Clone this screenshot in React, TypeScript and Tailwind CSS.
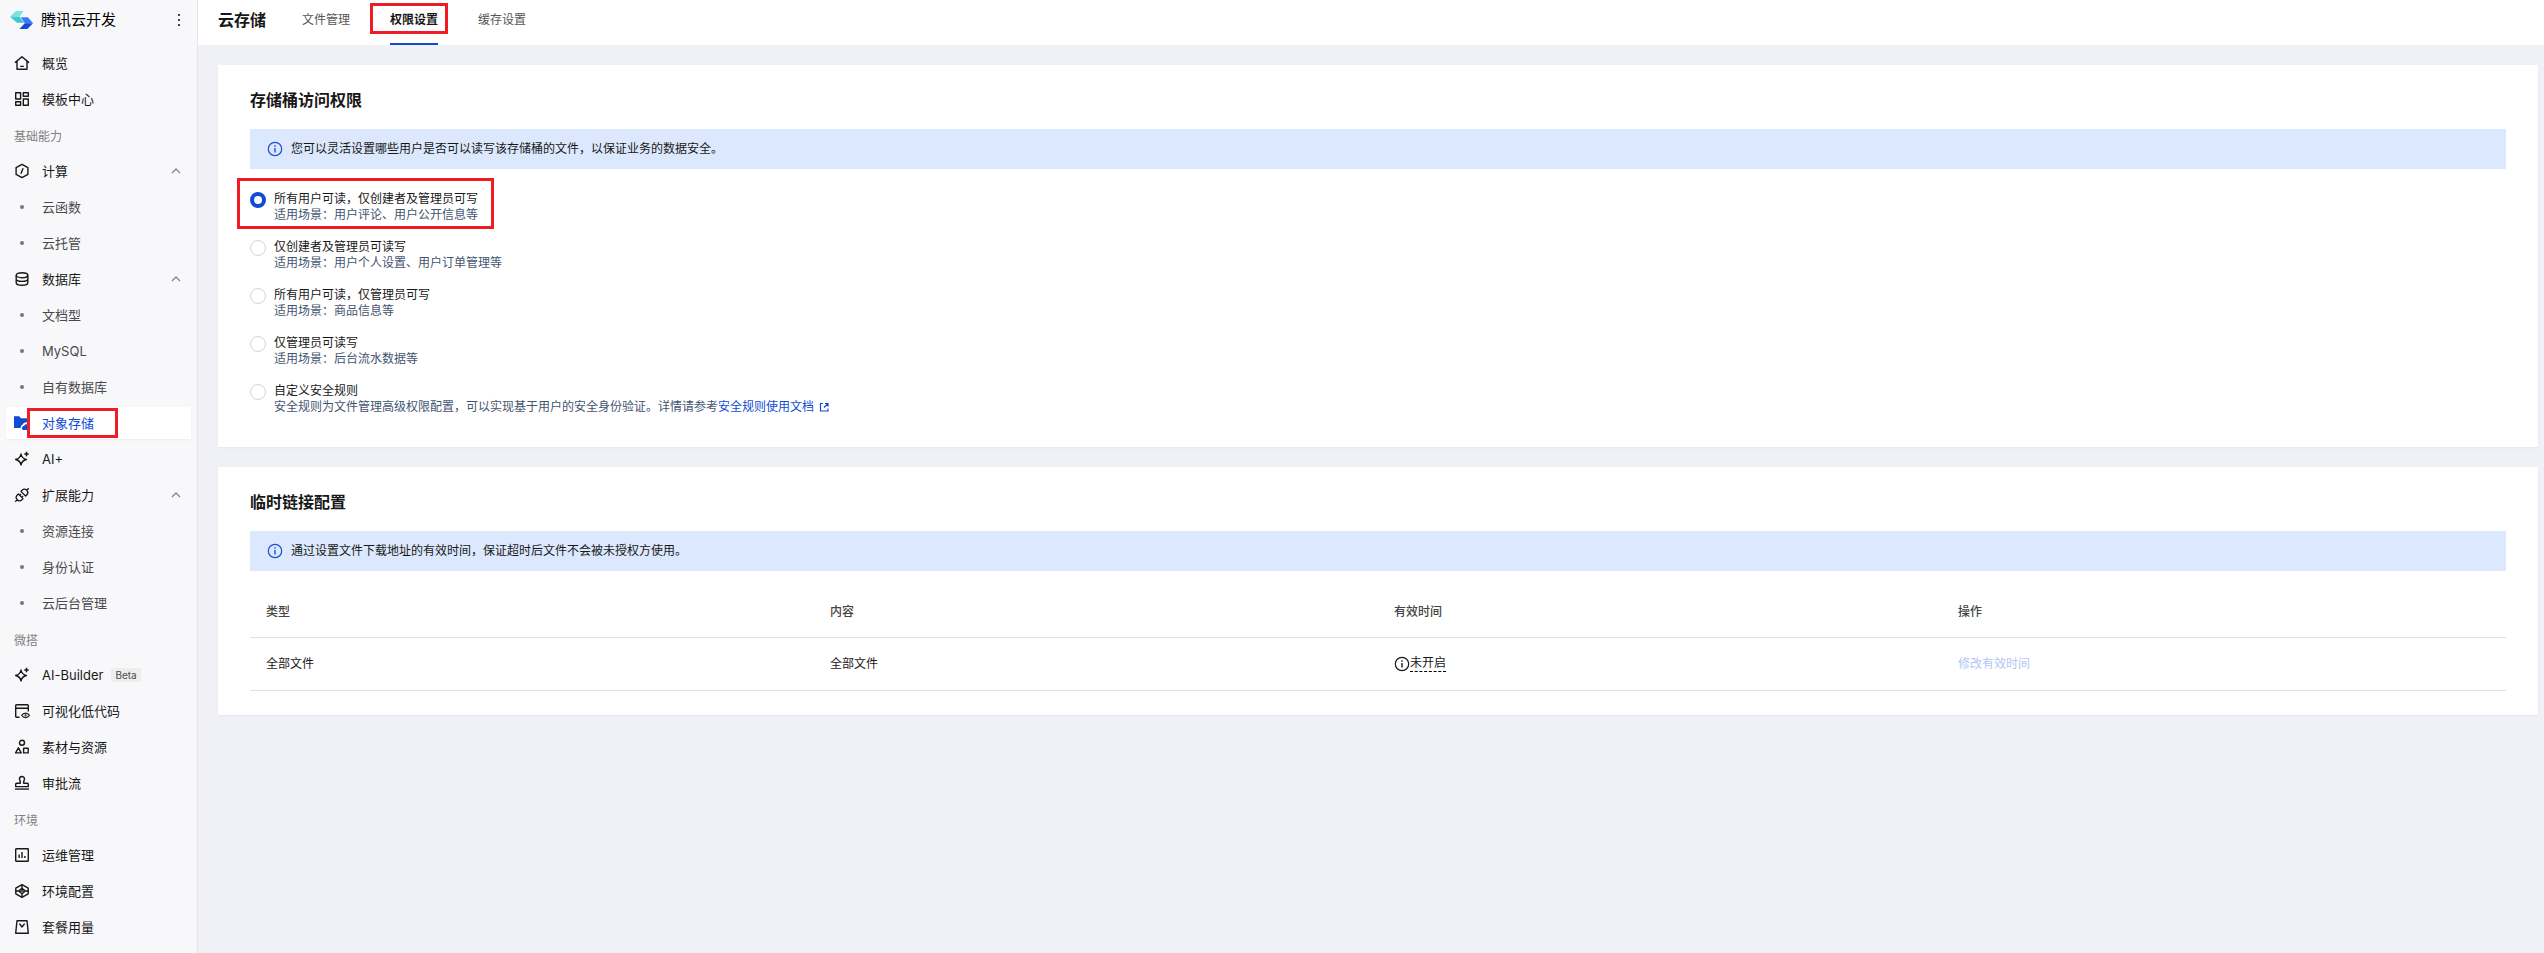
import React, { useState } from "react";

type MenuItem = {
    label: string;
    kind: "item" | "sub" | "section";
    icon?: React.ReactNode;
    expandable?: boolean;
    badge?: string;
};

type AccessRule = {
    id: string;
    title: string;
    desc: string;
    link?: string;
};

function Icon({ children }: { children: React.ReactNode }) {
    return (
        <svg
            viewBox="0 0 16 16"
            className="w-4 h-4 shrink-0"
            fill="none"
            stroke="currentColor"
            strokeWidth="1.4"
            strokeLinejoin="round"
        >
            {children}
        </svg>
    );
}

const sparkle = (
    <Icon>
        <path d="M7 3C7.6 6.4 8.8 7.7 12.4 8.5 8.8 9.3 7.6 10.6 7 14 6.4 10.6 5.2 9.3 1.6 8.5 5.2 7.7 6.4 6.4 7 3Z" />
        <path d="M12.5.8v4.4M10.3 3h4.4" />
    </Icon>
);

const menu: MenuItem[] = [
    {
        label: "概览",
        kind: "item",
        icon: (
            <Icon>
                <path d="M1 7.6 8 1.7l7 5.9M3 6.2v8.1h10V6.2M6.2 11.4h3.6" />
            </Icon>
        ),
    },
    {
        label: "模板中心",
        kind: "item",
        icon: (
            <Icon>
                <path d="M1.7 1.7h4.9V8H1.7zM9.3 1.7h5v3.5h-5zM1.7 10.8h4.9v3.5H1.7zM9.3 8h5v6.3h-5z" />
            </Icon>
        ),
    },
    { label: "基础能力", kind: "section" },
    {
        label: "计算",
        kind: "item",
        expandable: true,
        icon: (
            <Icon>
                <path d="M8 1.4 13.9 4.6v6.8L8 14.6 2.1 11.4V4.6ZM9.1 5.2 6.9 10.8" />
            </Icon>
        ),
    },
    { label: "云函数", kind: "sub" },
    { label: "云托管", kind: "sub" },
    {
        label: "数据库",
        kind: "item",
        expandable: true,
        icon: (
            <Icon>
                <ellipse cx="8" cy="4.2" rx="5.8" ry="2.5" />
                <path d="M2.2 4.2v7.6c0 1.4 2.6 2.5 5.8 2.5s5.8-1.1 5.8-2.5V4.2M2.2 8c0 1.4 2.6 2.4 5.8 2.4s5.8-1 5.8-2.4" />
            </Icon>
        ),
    },
    { label: "文档型", kind: "sub" },
    { label: "MySQL", kind: "sub" },
    { label: "自有数据库", kind: "sub" },
    {
        label: "对象存储",
        kind: "item",
        icon: (
            <svg viewBox="0 0 16 16" className="w-4 h-4 shrink-0" fill="currentColor">
                <path d="M0 1.3h5.2L7 3.2h7.5v4.6c-1.8-1.2-4.9-.6-5.7 1.7C7.2 10 6.5 11.7 6.7 13H0Z" />
                <path d="M8 13.4c0-1.6 1-2.6 2.3-2.7.8-2 4.2-2 4.7.2 1 .3 1 4-.6 4H9.6C8.6 14.9 8 14.3 8 13.4Z" />
            </svg>
        ),
    },
    { label: "AI+", kind: "item", icon: sparkle },
    {
        label: "扩展能力",
        kind: "item",
        expandable: true,
        icon: (
            <Icon>
                <g transform="rotate(-45 8 8)" strokeWidth="1.3">
                    <path d="M-1.6 8H1.4M14.6 8h3M6.2 4.7H4.6a3.3 3.3 0 0 0 0 6.6h1.6ZM9.8 4.7h1.6a3.3 3.3 0 0 1 0 6.6H9.8ZM6.2 6.6h1.9M6.2 9.4h1.9" />
                </g>
            </Icon>
        ),
    },
    { label: "资源连接", kind: "sub" },
    { label: "身份认证", kind: "sub" },
    { label: "云后台管理", kind: "sub" },
    { label: "微搭", kind: "section" },
    { label: "AI-Builder", kind: "item", icon: sparkle, badge: "Beta" },
    {
        label: "可视化低代码",
        kind: "item",
        icon: (
            <Icon>
                <path d="M5.6 14.3H2.6a.9.9 0 0 1-.9-.9V2.6c0-.5.4-.9.9-.9h10.8c.5 0 .9.4.9.9v6M1.7 5.2h12.6" />
                <path d="M7.7 12.3c1.7-3 6-3 7.7 0-1.7 3-6 3-7.7 0Z" strokeWidth="1.2" />
                <circle cx="11.6" cy="12.3" r=".7" strokeWidth="1" />
            </Icon>
        ),
    },
    {
        label: "素材与资源",
        kind: "item",
        icon: (
            <Icon>
                <circle cx="8" cy="3.7" r="2.5" />
                <path d="M4.4 8.8 7.2 13.9H1.6ZM9.6 9.3h4.6v4.6H9.6Z" />
            </Icon>
        ),
    },
    {
        label: "审批流",
        kind: "item",
        icon: (
            <Icon>
                <path d="M1.7 11.6V9.3c0-.6.4-1 1-1h3.6c.6-1.7-.8-2.9-.8-4.3a2.5 2.5 0 0 1 5 0c0 1.4-1.4 2.6-.8 4.3h3.6c.6 0 1 .4 1 1v2.3Z" />
                <path d="M1 14.1h14" strokeWidth="1.8" strokeOpacity=".75" />
            </Icon>
        ),
    },
    { label: "环境", kind: "section" },
    {
        label: "运维管理",
        kind: "item",
        icon: (
            <Icon>
                <rect x="1.7" y="1.7" width="12.6" height="12.6" rx=".6" />
                <path d="M5.1 7.4v3.6M8 5v6M10.9 8.9V11" />
            </Icon>
        ),
    },
    {
        label: "环境配置",
        kind: "item",
        icon: (
            <Icon>
                <path d="M8 1.7 14.2 5.2v5.6L8 14.3 1.8 10.8V5.2Z" />
                <path d="M8 5.2 11.4 8 8 10.8 4.6 8ZM8 1.7v3.5M8 10.8v3.5M1 8h3.6M11.4 8H15M6.4 8h3.2" />
            </Icon>
        ),
    },
    {
        label: "套餐用量",
        kind: "item",
        icon: (
            <Icon>
                <path d="M3 1.7h10l1.3 12.6H1.7ZM5.4 4.6 8 8l2.6-3.4" />
            </Icon>
        ),
    },
];

const rules: AccessRule[] = [
    { id: "public-read", title: "所有用户可读，仅创建者及管理员可写", desc: "适用场景：用户评论、用户公开信息等" },
    { id: "private", title: "仅创建者及管理员可读写", desc: "适用场景：用户个人设置、用户订单管理等" },
    { id: "admin-write", title: "所有用户可读，仅管理员可写", desc: "适用场景：商品信息等" },
    { id: "admin-only", title: "仅管理员可读写", desc: "适用场景：后台流水数据等" },
    {
        id: "custom",
        title: "自定义安全规则",
        desc: "安全规则为文件管理高级权限配置，可以实现基于用户的安全身份验证。详情请参考",
        link: "安全规则使用文档",
    },
];

const tabs = ["文件管理", "权限设置", "缓存设置"];

function Highlight({ className }: { className: string }) {
    return <span className={`absolute border-3 border-[#ee1c25] pointer-events-none ${className}`} />;
}

function InfoIcon({ className }: { className: string }) {
    return (
        <svg viewBox="0 0 16 16" className={`w-4 h-4 shrink-0 ${className}`} fill="none" stroke="currentColor">
            <circle cx="8" cy="8" r="6.7" strokeWidth="1.2" />
            <path d="M8 7v4.5M8 4.3v1.5" strokeWidth="1.4" />
        </svg>
    );
}

function Notice({ children }: { children: React.ReactNode }) {
    return (
        <div className="flex items-center gap-2 h-10 px-[17px] mt-[17px] bg-[#dce8fd] text-[#181818]">
            <InfoIcon className="text-[#1c50d4]" />
            <p>{children}</p>
        </div>
    );
}

function Sidebar() {
    const [active, setActive] = useState("对象存储");

    return (
        <aside className="w-[198px] shrink-0 bg-[#f8f8fb] border-r border-[#e4e6ee]">
            <div className="flex items-center h-10 px-[10px]">
                <svg viewBox="0 0 23 18" className="w-[23px] h-[18px]">
                    <path d="M0 5.8 6 0h7.5L9.6 5.8Z" fill="#7be3dd" />
                    <path d="M0 5.8h9.6l4.6 6H7Z" fill="#3cc8c4" />
                    <path d="M10.8 6.2H18l5 6h-8.2Z" fill="#3d78f8" />
                    <path d="M23 12.2 17.4 18H9.4l5.4-5.8Z" fill="#1249d6" />
                </svg>
                <span className="ml-2 text-[15px] text-black">腾讯云开发</span>
                <button type="button" aria-label="更多" className="ml-auto w-4 h-4 text-[#444]">
                    <svg viewBox="0 0 16 16" fill="currentColor">
                        <path d="M7 2h2v2H7zM7 7h2v2H7zM7 12h2v2H7z" />
                    </svg>
                </button>
            </div>
            <nav className="flex flex-col gap-1 px-[6px] pt-[7px] text-[13px]">
                {menu.map(item => {
                    if (item.kind === "section") {
                        return (
                            <div key={item.label} className="flex items-center h-8 px-2 pt-1 text-xs text-[#808080]">
                                {item.label}
                            </div>
                        );
                    }
                    const isActive = item.label === active;
                    const color = isActive
                        ? "bg-white text-[#0f4bd3] shadow-xs"
                        : item.kind === "sub" ? "text-[#4a4a4a]" : "text-[#181818]";
                    return (
                        <button
                            key={item.label}
                            type="button"
                            onClick={() => setActive(item.label)}
                            className={`relative flex items-center h-8 px-2 text-left ${color}`}
                        >
                            {item.kind === "sub" ? (
                                <span className="flex justify-center w-4">
                                    <span className="w-1 h-1 rounded-full bg-[#777]" />
                                </span>
                            ) : item.icon}
                            <span className="ml-3 pt-0.5">{item.label}</span>
                            {item.badge && (
                                <span className="ml-2 px-1 rounded-xs bg-[#ededed] text-[10px] leading-[14px] text-[#4a4a4a]">
                                    {item.badge}
                                </span>
                            )}
                            {item.expandable && (
                                <svg
                                    viewBox="0 0 12 12"
                                    className="ml-auto w-3 h-3 mr-px text-[#888]"
                                    fill="none"
                                    stroke="currentColor"
                                    strokeWidth="1.3"
                                >
                                    <path d="m2 8 4-4 4 4" />
                                </svg>
                            )}
                            {item.label === "对象存储" && <Highlight className="left-[21px] top-px w-[91px] h-[30px]" />}
                        </button>
                    );
                })}
            </nav>
        </aside>
    );
}

export default function App() {
    const [tab, setTab] = useState("权限设置");
    const [rule, setRule] = useState("public-read");

    return (
        <div className="flex min-h-screen bg-[#f0f1f7] text-xs text-[#181818] font-['Inter','Noto_Sans_CJK_SC',sans-serif]">
            <Sidebar />
            <div className="flex-1 min-w-0">
                <header className="flex items-center h-[45px] px-5 bg-white">
                    <h1 className="text-base font-bold pb-1.5">云存储</h1>
                    <div className="flex gap-10 h-full ml-9">
                        {tabs.map(name => (
                            <button
                                key={name}
                                type="button"
                                onClick={() => setTab(name)}
                                className={`relative pb-1 border-b-2 ${
                                    name === tab ? "border-[#0f4bd3] font-bold text-[#181818]" : "border-transparent text-[#555]"
                                }`}
                            >
                                {name}
                                {name === "权限设置" && <Highlight className="-left-5 top-[3px] w-[78px] h-[31px]" />}
                            </button>
                        ))}
                    </div>
                </header>

                <main className="flex flex-col gap-5 pl-5 pr-[6px] py-5">
                    <section className="p-8 pt-[23px] bg-white shadow-xs">
                        <h2 className="text-base font-bold">存储桶访问权限</h2>
                        <Notice>您可以灵活设置哪些用户是否可以读写该存储桶的文件，以保证业务的数据安全。</Notice>
                        <div className="flex flex-col gap-4 pt-[22px]">
                            {rules.map(item => (
                                <div key={item.id} className="relative flex items-start gap-2 leading-4">
                                    <input
                                        id={item.id}
                                        type="radio"
                                        name="access"
                                        checked={rule === item.id}
                                        onChange={() => setRule(item.id)}
                                        className="appearance-none w-4 h-4 shrink-0 mt-px rounded-full bg-white border border-[#cfd5de] checked:border-4 checked:border-[#0f4bd3]"
                                    />
                                    <div>
                                        <label htmlFor={item.id} className="block">{item.title}</label>
                                        <p className="text-[#44546f]">
                                            {item.desc}
                                            {item.link && (
                                                <a href="#rules" className="inline-flex items-center gap-1 text-[#0f4bd3]">
                                                    {item.link}
                                                    <svg
                                                        viewBox="0 0 12 12"
                                                        className="w-3 h-3"
                                                        fill="none"
                                                        stroke="currentColor"
                                                        strokeWidth="1.2"
                                                    >
                                                        <path d="M5 2.5H2.5V10H10V7.5M7 2.5H10V5.5M10 2.5 6 6.5" />
                                                    </svg>
                                                </a>
                                            )}
                                        </p>
                                    </div>
                                    {item.id === "public-read" && (
                                        <Highlight className="-left-[13px] -top-[13px] w-[257px] h-[51px]" />
                                    )}
                                </div>
                            ))}
                        </div>
                    </section>

                    <section className="px-8 pt-[23px] pb-6 bg-white shadow-xs">
                        <h2 className="text-base font-bold">临时链接配置</h2>
                        <Notice>通过设置文件下载地址的有效时间，保证超时后文件不会被未授权方使用。</Notice>
                        <table className="w-full mt-4 table-fixed text-left">
                            <thead>
                                <tr className="h-[50px] border-b border-[#dfe2ec] text-[#444]">
                                    <th className="px-4 font-medium">类型</th>
                                    <th className="px-4 font-medium">内容</th>
                                    <th className="px-4 font-medium">有效时间</th>
                                    <th className="px-4 font-medium">操作</th>
                                </tr>
                            </thead>
                            <tbody>
                                <tr className="h-[53px] border-b border-[#dfe2ec]">
                                    <td className="px-4">全部文件</td>
                                    <td className="px-4">全部文件</td>
                                    <td className="px-4">
                                        <span className="flex items-center">
                                            <InfoIcon className="text-[#181818]" />
                                            <span className="border-b border-dashed border-black">未开启</span>
                                        </span>
                                    </td>
                                    <td className="px-4">
                                        <button type="button" disabled className="text-[#b0c8f8]">修改有效时间</button>
                                    </td>
                                </tr>
                            </tbody>
                        </table>
                    </section>
                </main>
            </div>
        </div>
    );
}
